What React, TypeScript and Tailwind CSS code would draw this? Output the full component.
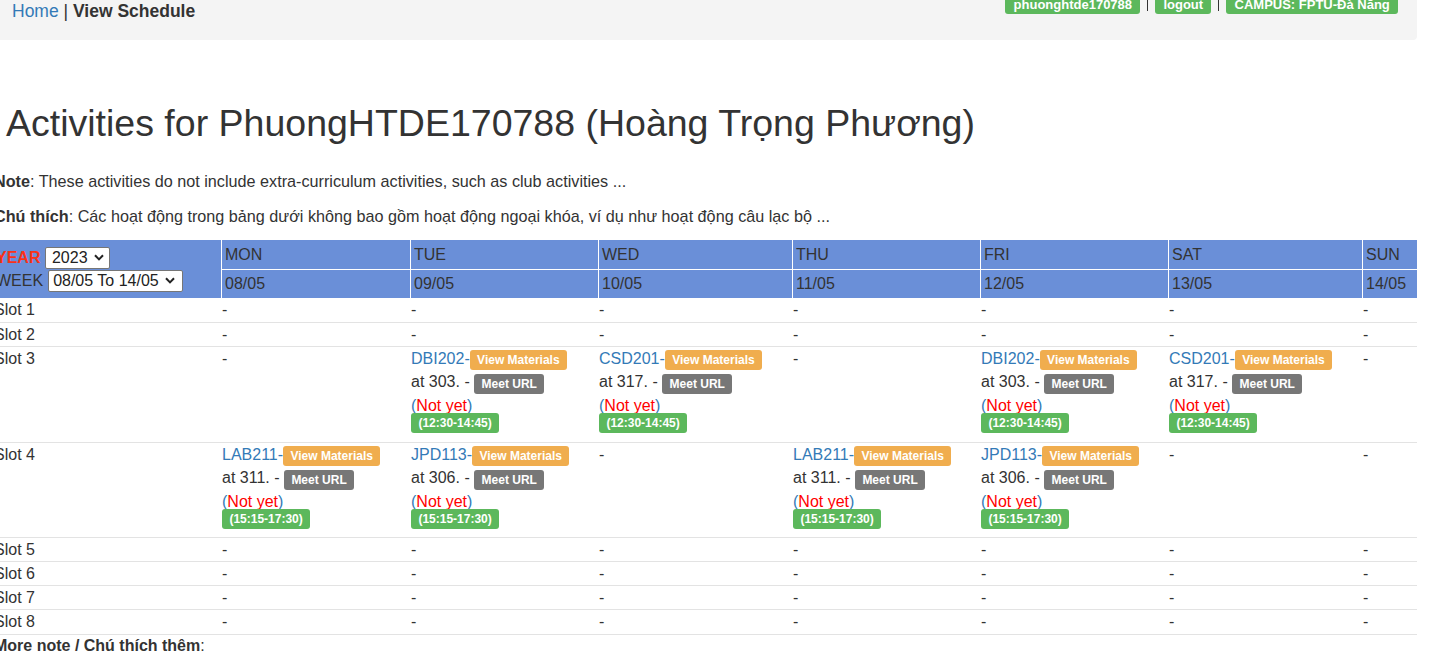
import React from "react";

const FONT = { fontFamily: '"Liberation Sans", Arial, sans-serif' };

function Label({ bg, children }: { bg: string; children: React.ReactNode }) {
  return (
    <span
      className={
        "inline-flex items-center h-[20px] px-[7.4px] rounded-[3px] text-[12px] font-bold text-white leading-none whitespace-nowrap " +
        bg
      }
    >
      {children}
    </span>
  );
}

function Badge({ children }: { children: React.ReactNode }) {
  return (
    <span className="inline-flex items-center h-[20px] px-[8.2px] rounded-[3px] bg-[#5cb85c] text-white text-[13px] font-bold leading-none whitespace-nowrap">
      {children}
    </span>
  );
}

function Sep() {
  return <span className="mx-[7px] mt-[6px] w-[1px] h-[11px] bg-[#333]" />;
}

function Chevron() {
  return (
    <svg width="10" height="7" viewBox="0 0 10 7" className="shrink-0">
      <path d="M1 1.2 L5 5.4 L9 1.2" fill="none" stroke="#222" strokeWidth="2" />
    </svg>
  );
}

type Act = { code: string; room: string; time: string } | null;

function Activity({ a }: { a: Act }) {
  if (!a) {
    return <div className="h-[22px] leading-[22px]">-</div>;
  }
  return (
    <div>
      <div className="flex items-end h-[22px] leading-[22px]">
        <a className="text-[#337ab7]">{a.code}-</a>
        <Label bg="bg-[#f0ad4e]">View Materials</Label>
      </div>
      <div className="flex items-end h-[24px] leading-[24px]">
        <span className="whitespace-pre">at {a.room}. - </span>
        <Label bg="bg-[#777777]">Meet URL</Label>
      </div>
      <div className="h-[19px] leading-[24px] whitespace-nowrap">
        <span className="text-[#337ab7]">(</span>
        <span className="text-[#ff0000]">Not yet</span>
        <span className="text-[#337ab7]">)</span>
      </div>
      <div className="flex">
        <Label bg="bg-[#5cb85c]">({a.time})</Label>
      </div>
    </div>
  );
}

const days = [
  ["MON", "08/05"],
  ["TUE", "09/05"],
  ["WED", "10/05"],
  ["THU", "11/05"],
  ["FRI", "12/05"],
  ["SAT", "13/05"],
  ["SUN", "14/05"],
];

const t3 = "12:30-14:45";
const t4 = "15:15-17:30";

const slot3: Act[] = [
  null,
  { code: "DBI202", room: "303", time: t3 },
  { code: "CSD201", room: "317", time: t3 },
  null,
  { code: "DBI202", room: "303", time: t3 },
  { code: "CSD201", room: "317", time: t3 },
  null,
];

const slot4: Act[] = [
  { code: "LAB211", room: "311", time: t4 },
  { code: "JPD113", room: "306", time: t4 },
  null,
  { code: "LAB211", room: "311", time: t4 },
  { code: "JPD113", room: "306", time: t4 },
  null,
  null,
];

const tdFirst = "align-top p-0 border-b border-[#e3e3e3] text-[#333]";
const tdBase = "align-top p-0 pl-[1px] border-b border-[#e3e3e3] text-[#333]";

function SimpleRow({ label, h }: { label: string; h: string }) {
  return (
    <tr>
      <td className={tdFirst + " leading-[23px] " + h}>{label}</td>
      {days.map((d) => (
        <td key={d[0]} className={tdBase + " leading-[23px] " + h}>
          -
        </td>
      ))}
    </tr>
  );
}

function ActRow({ label, acts, h, pb }: { label: string; acts: Act[]; h: string; pb: string }) {
  return (
    <tr>
      <td className={tdFirst + " pt-[1px] " + h}>
        <div className="h-[22px] leading-[22px]">{label}</div>
      </td>
      {acts.map((a, i) => (
        <td key={i} className={tdBase + " pt-[1px] " + pb + " " + h}>
          <Activity a={a} />
        </td>
      ))}
    </tr>
  );
}

export default function App() {
  return (
    <div className="min-h-screen bg-white overflow-hidden" style={FONT}>
      <div className="-ml-[6px] w-[1423px] text-[16px] text-[#333]">
        {/* top bar */}
        <div className="flex justify-between items-start h-[40px] bg-[#f4f4f4] rounded-br-[4px]">
          <div className="pl-[18px] text-[17.5px] leading-[22px] text-[#333] whitespace-pre">
            <a className="text-[#337ab7]">Home</a>
            {" | "}
            <b>View Schedule</b>
          </div>
          <div className="flex items-start -mt-[6px] pr-[19px]">
            <Badge>phuonghtde170788</Badge>
            <Sep />
            <Badge>logout</Badge>
            <Sep />
            <Badge>CAMPUS: FPTU-Đà Nẵng</Badge>
          </div>
        </div>

        <h1 className="mt-[63px] pl-[12px] h-[41px] leading-[41px] text-[37.5px] font-normal text-[#333] whitespace-nowrap">
          Activities for PhuongHTDE170788 (Hoàng Trọng Phương)
        </h1>

        <p className="mt-[26px] h-[22px] leading-[22px] text-[16.2px] whitespace-nowrap">
          <b>Note</b>: These activities do not include extra-curriculum activities, such as club activities ...
        </p>
        <p className="mt-[13px] h-[22px] leading-[22px] text-[16.2px] whitespace-nowrap">
          <b>Chú thích</b>: Các hoạt động trong bảng dưới không bao gồm hoạt động ngoại khóa, ví dụ như hoạt động câu lạc bộ ...
        </p>

        <table className="mt-[13px] w-[1423px] table-fixed border-separate border-spacing-0">
          <colgroup>
            <col className="w-[227px]" />
            <col className="w-[189px]" />
            <col className="w-[188px]" />
            <col className="w-[194px]" />
            <col className="w-[188px]" />
            <col className="w-[188px]" />
            <col className="w-[194px]" />
            <col className="w-[55px]" />
          </colgroup>
          <thead>
            <tr>
              <th rowSpan={2} className="bg-[#6a8fd8] align-middle text-left font-normal p-0 pl-[2px]">
                <div className="flex items-center h-[23px] whitespace-nowrap">
                  <span className="font-bold text-[#fa3218]">YEAR</span>
                  <div className="ml-[4.5px] flex items-center justify-between w-[65px] h-[22px] bg-white border border-[#767676] rounded-[2px] pl-[6px] pr-[5px] text-[#222]">
                    <span className="leading-[20px]">2023</span>
                    <Chevron />
                  </div>
                </div>
                <div className="flex items-center h-[23px] whitespace-nowrap">
                  <span className="text-[#333]">WEEK</span>
                  <div className="ml-[5px] flex items-center justify-between w-[135px] h-[22px] bg-white border border-[#767676] rounded-[2px] pl-[4px] pr-[7px] text-[#222]">
                    <span className="leading-[20px]">08/05 To 14/05</span>
                    <Chevron />
                  </div>
                </div>
              </th>
              {days.map((d) => (
                <th
                  key={d[0]}
                  className="bg-[#6a8fd8] h-[30px] border-l border-b border-white text-left font-normal p-0 pl-[3px] align-middle text-[#333] whitespace-nowrap"
                >
                  {d[0]}
                </th>
              ))}
            </tr>
            <tr>
              {days.map((d) => (
                <th
                  key={d[1]}
                  className="bg-[#6a8fd8] h-[28px] border-l border-white text-left font-normal p-0 pl-[3px] align-middle text-[#333] whitespace-nowrap"
                >
                  {d[1]}
                </th>
              ))}
            </tr>
          </thead>
          <tbody>
            <SimpleRow label="Slot 1" h="h-[25px]" />
            <SimpleRow label="Slot 2" h="h-[24px]" />
            <ActRow label="Slot 3" acts={slot3} h="h-[96px]" pb="pb-[9px]" />
            <ActRow label="Slot 4" acts={slot4} h="h-[95px]" pb="pb-[8px]" />
            <SimpleRow label="Slot 5" h="h-[24px]" />
            <SimpleRow label="Slot 6" h="h-[24px]" />
            <SimpleRow label="Slot 7" h="h-[24px]" />
            <SimpleRow label="Slot 8" h="h-[25px]" />
          </tbody>
        </table>

        <p className="h-[22px] leading-[22px]">
          <b>More note / Chú thích thêm</b>:
        </p>
      </div>
    </div>
  );
}
